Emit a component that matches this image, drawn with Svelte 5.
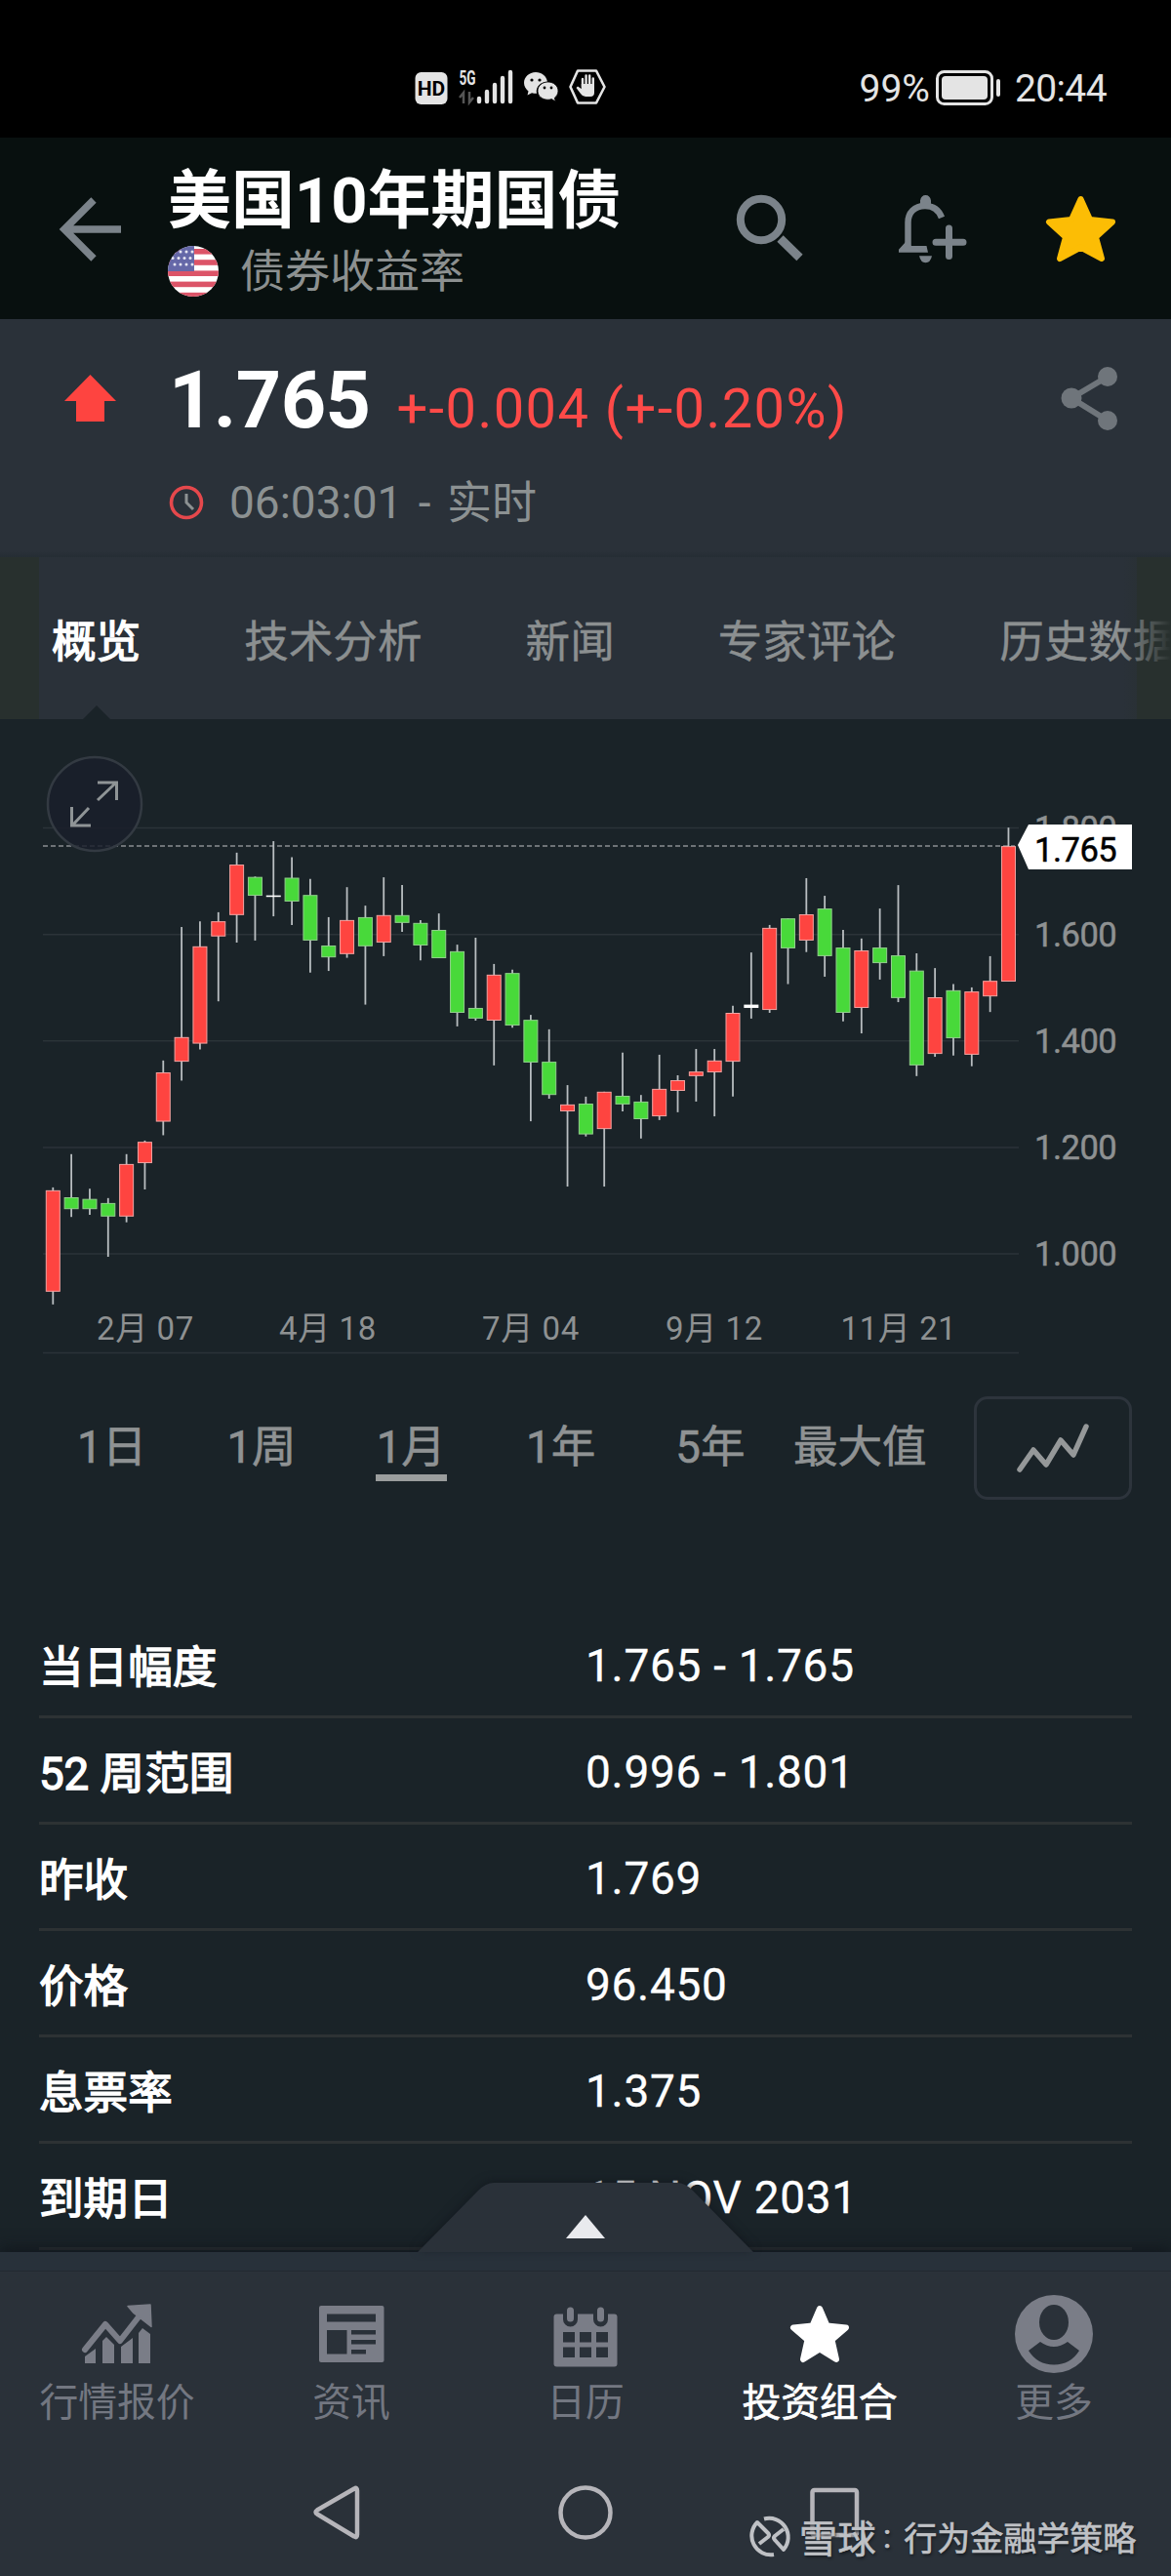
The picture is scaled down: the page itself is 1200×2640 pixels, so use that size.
<script>
  const tabs = ['概览', '技术分析', '新闻', '专家评论', '历史数据'];
  const ranges = ['1日', '1周', '1月', '1年', '5年', '最大值'];
  let activeTab = $state('概览');
  let activeRange = $state('1月');

  const details = [
    ['当日幅度', '1.765 - 1.765'],
    ['52 周范围', '0.996 - 1.801'],
    ['昨收', '1.769'],
    ['价格', '96.450'],
    ['息票率', '1.375'],
    ['到期日', '15 NOV 2031'],
  ];

  const gridPrices = [1.8, 1.6, 1.4, 1.2, 1.0];
  const dates = [
    ['2月 07', 149],
    ['4月 18', 336],
    ['7月 04', 544],
    ['9月 12', 732],
    ['11月 21', 921],
  ];

  // type (r = up, g = down, w = flat), high, body top, body bottom, low
  // levels are measured downwards, 1296 steps per point, 1.800 sits at 258
  const candles = [
    ['r', 1133, 1140, 1387, 1418], ['g', 1052, 1157, 1186, 1205], ['g', 1136, 1161, 1186, 1200],
    ['g', 1159, 1171, 1204, 1302], ['r', 1052, 1076, 1204, 1218], ['r', 1019, 1022, 1074, 1138],
    ['r', 824, 853, 973, 1006], ['r', 499, 767, 827, 873], ['r', 485, 546, 783, 797],
    ['r', 463, 485, 522, 680], ['r', 318, 347, 470, 537], ['g', 376, 377, 423, 532],
    ['w', 290, 422, 424, 473], ['g', 329, 379, 437, 494], ['g', 382, 421, 532, 610],
    ['g', 475, 544, 573, 606], ['r', 402, 482, 565, 574], ['g', 447, 475, 546, 688],
    ['r', 378, 470, 537, 570], ['g', 397, 470, 489, 511], ['g', 482, 489, 544, 580],
    ['g', 466, 506, 575, 575], ['g', 542, 558, 708, 741], ['g', 525, 696, 722, 727],
    ['r', 589, 615, 727, 836], ['g', 603, 611, 739, 744], ['g', 713, 725, 829, 972],
    ['g', 748, 827, 908, 917], ['r', 884, 931, 948, 1131], ['g', 912, 929, 1004, 1009],
    ['r', 900, 900, 991, 1131], ['g', 805, 910, 931, 948], ['g', 908, 924, 967, 1014],
    ['r', 810, 893, 960, 969], ['r', 860, 872, 898, 950], ['r', 796, 851, 862, 924],
    ['r', 796, 824, 853, 960], ['r', 691, 708, 827, 912], ['w', 561, 688, 696, 722],
    ['r', 494, 501, 701, 708], ['g', 478, 478, 551, 638], ['r', 380, 468, 532, 560],
    ['g', 423, 454, 570, 620], ['g', 506, 549, 708, 729], ['r', 527, 556, 696, 758],
    ['g', 454, 549, 587, 627], ['g', 397, 568, 672, 682], ['g', 563, 605, 836, 862],
    ['r', 599, 670, 808, 815], ['g', 638, 653, 770, 812], ['r', 646, 656, 810, 838],
    ['r', 570, 630, 668, 706], ['r', 257, 302, 632, 632],
  ];

  const STEP = 18.83;
  const level = (v) => v / 2.3758;
  const priceY = (p) => level(258 + (1.8 - p) * 1296);
  const candleX = (i) => 54.3 + i * STEP;
</script>

<div class="phone">
  <div class="status">
    <svg class="status-left" width="200" height="40" viewBox="424 70 200 40">
      <rect x="425.5" y="74" width="33" height="33" rx="6" fill="#e4e4e4" />
      <text x="442" y="98" class="hd">HD</text>
      <text x="470.500" y="86.500" class="fiveg" textLength="17" lengthAdjust="spacingAndGlyphs">5G</text>
      <path d="M475 106V95l-4 5M481 94v11l4-5" stroke="#555" stroke-width="2.500" fill="none" />
      <path d="M491 104v-3M499 104v-10M507 104v-17M515 104v-24M523 104v-30" stroke="#e4e4e4" stroke-width="4.400" stroke-linecap="round" />
      <path d="M549 74c-7 0-12 5-12 11 0 3.500 2 6.500 4.500 8.500l-1 4 4.500-2.300c1.500.4 3 .6 5 .6-1.500-7 4-12 11-12-1-6-6-9.800-12-9.800z" fill="#e4e4e4" />
      <path d="M561.500 84c-6 0-10.500 4-10.500 9.200s4.500 9 10.500 9c1.300 0 2.600-.2 3.800-.6l4 2.400-1-3.700c2.300-1.700 3.700-4.200 3.700-7.100 0-5.200-4.500-9.200-10.500-9.200z" fill="#e4e4e4" stroke="#000" stroke-width=".8" />
      <g fill="#000"><circle cx="545" cy="82" r="1.600" /><circle cx="553" cy="82" r="1.600" /><circle cx="558" cy="90" r="1.400" /><circle cx="565" cy="90" r="1.400" /></g>
      <path d="M592 72.500h19l8.500 16.500-8.500 16.500h-19L584.500 89z" fill="none" stroke="#e4e4e4" stroke-width="2.600" stroke-linejoin="round" />
      <path d="M597 89v-8M600.600 88v-10.500M604.200 88v-10.500M607.800 89v-8.500" stroke="#e4e4e4" stroke-width="2.400" stroke-linecap="round" />
      <path d="M609 86v9q0 4-4 4h-5q-3 0-5-3l-4.500-6 1.500-1.500 3.800 2.500V86z" fill="#e4e4e4" />
    </svg>
    <div class="status-right">
      <span>99%</span>
      <svg width="67" height="36" viewBox="0 0 67 36">
        <rect x="1.500" y="1.500" width="56" height="33" rx="7" fill="none" stroke="#e4e4e4" stroke-width="3" />
        <rect x="6" y="6" width="47" height="24" rx="4" fill="#e4e4e4" />
        <rect x="62" y="9" width="4" height="18" rx="2" fill="#e4e4e4" />
      </svg>
      <span class="clock">20:44</span>
    </div>
  </div>

  <header>
    <svg class="back" width="66" height="70" viewBox="0 0 66 70" fill="none" stroke="#7b838a" stroke-width="7.500">
      <path d="M64 35H7M36 5L6 35l30 30" />
    </svg>
    <div class="titles">
      <h1>美国10年期国债</h1>
      <div class="subtitle">
        <svg width="52" height="52" viewBox="0 0 52 52">
          <clipPath id="flag"><circle cx="26" cy="26" r="26" /></clipPath>
          <g clip-path="url(#flag)">
            <rect width="52" height="52" fill="#fff" />
            {#each [0, 1, 2, 3, 4] as i}
              <rect y={3 + i * 11.2} width="52" height="5.600" fill="#dc5468" />
            {/each}
            <rect width="27" height="26" fill="#6568a8" />
            {#each [5, 11.5, 18] as y, r}
              {#each [7, 13, 19, 25] as x}
                <circle cx={x - (r % 2) * 2} cy={y + 1} r="1.500" fill="#e6e6f2" />
              {/each}
            {/each}
          </g>
        </svg>
        <span>债券收益率</span>
      </div>
    </div>
    <svg class="tools" width="400" height="80" viewBox="750 195 400 80">
      <g fill="none" stroke="#7b838a">
        <circle cx="780" cy="225" r="21.200" stroke-width="8" />
        <path d="M799.500 244.500l20 19.500" stroke-width="9" />
        <path d="M965 223c-3-8-9-12-17-12-11 0-17.500 7-17.500 17v27" stroke-width="6.500" />
        <path d="M972.500 234v28.500M959 248.300h28" stroke-width="7" stroke-linecap="round" />
      </g>
      <path d="M943 209v-3.500q1-5.500 5.500-5.500t5.500 5.500v3.500zM921 258.700v-3l7-7.700 6 4h15.500l1.500 6.700zM942 262.200h13q-1.500 7-6.500 7t-6.500-7z" fill="#7b838a" />
      <path d="M1107.500 204l9.500 21 23 2.500-17 15.500 6 22-21.500-11.500-21.500 11.500 6-22-17-15.500 23-2.500z" fill="#fcbd05" stroke="#fcbd05" stroke-width="6" stroke-linejoin="round" />
    </svg>
  </header>

  <section class="quote">
    <svg class="up" width="53" height="48" viewBox="0 0 53 48"><path d="M26.500 0L53 27H41v21H12V27H0z" fill="#fe4440" /></svg>
    <div class="numbers">
      <div class="price-line">
        <strong>1.765</strong>
        <span class="change">+-0.004 (+-0.20%)</span>
      </div>
      <div class="time">
        <svg width="36" height="36" viewBox="0 0 36 36" fill="none">
          <circle cx="18" cy="18" r="15.500" stroke="#e5484c" stroke-width="3.600" />
          <path d="M18 9v9l7 7" stroke="#8d9293" stroke-width="3" />
        </svg>
        <span>06:03:01 - 实时</span>
      </div>
    </div>
    <svg class="share" width="60" height="68" viewBox="0 0 60 68" fill="#6f757b">
      <path d="M48 11L11 33l37 23" fill="none" stroke="#6f757b" stroke-width="6" />
      <circle cx="48" cy="11" r="10" /><circle cx="11" cy="33" r="10.500" /><circle cx="48" cy="56" r="10" />
    </svg>
  </section>

  <nav class="tabs">
    {#each tabs as tab}
      <button class:active={tab === activeTab} onclick={() => (activeTab = tab)}>{tab}</button>
    {/each}
  </nav>

  <main>
    <svg class="chart" width="1200" height="660" viewBox="0 0 1200 660">
      {#each gridPrices as p}
        <line x1="44" x2="1044" y1={priceY(p)} y2={priceY(p)} class="grid" />
        <text x="1060" y={priceY(p) + 12.5} class="axis">{p.toFixed(3)}</text>
      {/each}
      <line x1="44" x2="1044" y1="646.500" y2="646.500" class="grid" />
      <line x1="44" x2="1040" y1="127" y2="127" class="last" />

      {#each candles as [kind, high, top, bottom, low], i}
        <line x1={candleX(i)} x2={candleX(i)} y1={level(high)} y2={level(low)} class="wick" />
        {#if kind === 'w'}
          <rect x={candleX(i) - 7.5} y={level(top)} width="15" height={Math.max(1.6, level(bottom - top))} fill="#fff" />
        {:else}
          <rect x={candleX(i) - 7} y={level(top) + 0.5} width="14" height={level(bottom - top) - 1} class={kind === 'r' ? 'rise' : 'fall'} />
        {/if}
      {/each}

      {#each dates as [label, x]}
        <text {x} y="633" class="date">{label}</text>
      {/each}

      <path d="M1043 126l11-21h106v46h-106z" fill="#fff" />
      <text x="1060" y="142.500" class="axis tag">1.765</text>

      <circle cx="97" cy="84" r="48" fill="#1a1f2a" fill-opacity=".85" stroke="#333a42" stroke-width="2.500" />
      <path d="M100 80l19-18M100 62h19.500v18M91 88l-17 18M73.500 87v19H93" fill="none" stroke="#8f9496" stroke-width="3" />
    </svg>

    <div class="ranges">
      <div class="range-list">
        {#each ranges as range}
          <button class:active={range === activeRange} onclick={() => (activeRange = range)}><span>{range}</span></button>
        {/each}
      </div>
      <button class="chart-type" aria-label="图表类型">
        <svg width="80" height="56" viewBox="0 0 80 56">
          <path d="M6 50l14-20 13 15 15-25 13 15L74 6" fill="none" stroke="#959899" stroke-width="5.500" stroke-linecap="round" stroke-linejoin="round" />
        </svg>
      </button>
    </div>

    <dl>
      {#each details as [name, value]}
        <div class="row">
          <dt>{name}</dt>
          <dd>{value}</dd>
        </div>
      {/each}
    </dl>
  </main>

  <footer>
    <svg class="flap" width="360" height="80" viewBox="420 2228 360 80">
      <path d="M428 2308l62-63q8-8 16-8h188q8 0 16 8l62 63z" fill="#2a3139" />
      <path d="M580 2294l20-24 20 24z" fill="#e9eaee" />
    </svg>
    <div class="handle"></div>
    <div class="menu">
      <div class="item">
        <svg width="80" height="80" viewBox="80 2352 80 80" fill="#7a7d87">
          <path d="M87 2408l21-26 15 17 21-27" fill="none" stroke="#7a7d87" stroke-width="6" stroke-linecap="round" stroke-linejoin="round" />
          <path d="M131 2363.500l23-1.500 1 22.500-9-7-9-7z" stroke="#7a7d87" stroke-width="1.500" stroke-linejoin="round" />
          <path d="M87 2415l11-8v15H87zM105 2399l4-4 8 8v19h-12zM124 2405l12-9v26h-12zM142 2391l4-5 8 6v30h-12z" />
        </svg>
        <span>行情报价</span>
      </div>
      <div class="item">
        <svg width="80" height="80" viewBox="320 2352 80 80">
          <rect x="327" y="2363" width="66.500" height="58" rx="2" fill="#7a7d87" />
          <path d="M335 2371.500h50v8h-50zM335 2388h20.500v24.500H335zM360 2388h25v4.500h-25zM360 2398h25v4.500h-25zM360 2408h15v4.500h-15z" fill="#2a3139" />
        </svg>
        <span>资讯</span>
      </div>
      <div class="item">
        <svg width="80" height="80" viewBox="560 2352 80 80">
          <rect x="567.500" y="2371.500" width="65" height="54" rx="3" fill="#7a7d87" />
          <path d="M584.500 2370v7M615.500 2370v7" stroke="#2a3139" stroke-width="15" stroke-linecap="round" />
          <path d="M584.500 2368v8M615.500 2368v8" stroke="#7a7d87" stroke-width="7" stroke-linecap="round" />
          {#each [577, 594, 611] as x}
            <path d="M{x} 2390h12v10.500h-12zM{x} 2405.500h12v10.500h-12z" fill="#2a3139" />
          {/each}
        </svg>
        <span>日历</span>
      </div>
      <div class="item active">
        <svg width="80" height="80" viewBox="800 2352 80 80">
          <path d="M840 2366l7.500 17.500 19.500 2-14.500 12.500 4.500 20-17-10.500-17 10.500 4.500-20-14.500-12.500 19.500-2z" fill="#fff" stroke="#fff" stroke-width="6" stroke-linejoin="round" />
        </svg>
        <span>投资组合</span>
      </div>
      <div class="item">
        <svg width="80" height="80" viewBox="1040 2352 80 80">
          <circle cx="1080" cy="2392" r="40" fill="#7a7d87" />
          <ellipse cx="1080" cy="2380" rx="15" ry="18" fill="#2a3139" />
          <path d="M1066 2400q14 10 28 0l12 9q-9 14.500-26 14.500t-26-14.500z" fill="#2a3139" />
        </svg>
        <span>更多</span>
      </div>
    </div>
    <svg class="system" width="1200" height="90" viewBox="0 2530 1200 90" fill="none" stroke="#b6b5ba" stroke-width="4.500">
      <path d="M363 2550.500q3-2 3 2v45q0 4-3 2l-38-23q-3-2 0-4z" />
      <circle cx="600" cy="2575" r="25.500" />
      <rect x="832.500" y="2552" width="45.500" height="46" rx="2" />
    </svg>
    <div class="watermark">
      <svg width="44" height="44" viewBox="0 0 44 44" fill="none" stroke="#bfc1c5" stroke-width="4" stroke-linejoin="round">
        <path d="M26 41A19.500 19.500 0 0 1 9 8l11 11q2 2 0 4l-9 7" />
        <path d="M16 4.500A19.500 19.500 0 0 1 36 36l-9-10q-2-2 0-4l9-7" />
      </svg>
      <span class="brand">雪球</span><span class="colon">:</span><span class="author">行为金融学策略</span>
    </div>
  </footer>
</div>

<style>
  :global(body) {
    margin: 0;
    background: #1a2328;
  }

  .phone {
    width: 1200px;
    height: 2640px;
    display: flex;
    flex-direction: column;
    overflow: hidden;
    background: #1a2328;
    color: #fff;
    font-family: Roboto, 'Noto Sans CJK SC', sans-serif;
  }

  button {
    border: 0;
    padding: 0;
    background: none;
    color: inherit;
    font: inherit;
  }

  .status {
    height: 141px;
    flex: none;
    box-sizing: border-box;
    padding: 70px 66px 0 424px;
    display: flex;
    justify-content: space-between;
    align-items: flex-start;
    background: #000;
    color: #e4e4e4;
  }

  .hd {
    font-size: 21px;
    font-weight: 700;
    text-anchor: middle;
    fill: #000;
  }

  .fiveg {
    font-size: 21px;
    font-weight: 700;
    fill: #e4e4e4;
  }

  .status-right {
    display: flex;
    align-items: center;
    height: 42px;
    font-size: 39px;
  }

  .status-right svg {
    margin: -2px 14px 0 6px;
  }

  .clock {
    letter-spacing: -0.6px;
  }

  header {
    height: 186px;
    flex: none;
    display: flex;
    background: #08100f;
  }

  .back {
    margin: 59px 0 0 60px;
  }

  .titles {
    margin: 27px 0 0 46px;
    width: 578px;
  }

  h1 {
    margin: 0;
    font-size: 65px;
    line-height: 76px;
    font-weight: 700;
    white-space: nowrap;
  }

  .subtitle {
    display: flex;
    align-items: center;
    gap: 22px;
    margin-top: 8px;
    line-height: 52px;
    font-size: 46px;
    color: #8c9090;
  }

  .tools {
    margin-top: 54px;
  }

  .quote {
    height: 244px;
    flex: none;
    display: flex;
    background: linear-gradient(#2a3139 238px, #252d34);
  }

  .up {
    margin: 57px 0 0 66px;
  }

  .numbers {
    width: 900px;
    margin: 34px 0 0 54px;
  }

  .price-line {
    display: flex;
    align-items: baseline;
    gap: 27px;
    line-height: 100px;
    white-space: nowrap;
  }

  strong {
    font-size: 81px;
    font-weight: 700;
    letter-spacing: -0.6px;
  }

  .change {
    font-size: 56px;
    color: #fe4a48;
    letter-spacing: 1.45px;
  }

  .time {
    display: flex;
    align-items: center;
    gap: 26px;
    margin-top: 16px;
    line-height: 60px;
    font-size: 46px;
    word-spacing: 5px;
    color: #8c9192;
  }

  .share {
    margin-top: 48px;
    margin-left: 14px;
  }

  .tabs {
    height: 166px;
    flex: none;
    position: relative;
    display: flex;
    gap: 106px;
    padding-left: 53px;
    overflow: hidden;
    background: linear-gradient(90deg, #28302e 40px, #2a3139 40px, #2a3139 1165px, #28302e 1165px);
  }

  /* fade the tab that runs off the right edge */
  .tabs::after {
    content: '';
    position: absolute;
    top: 0;
    right: 0;
    width: 50px;
    height: 100%;
    background: linear-gradient(90deg, transparent, #28302e);
  }

  .tabs button {
    position: relative;
    flex: none;
    font-size: 45.6px;
    color: #8b8f90;
    -webkit-text-stroke: 0.4px;
  }

  .tabs .active {
    color: #fff;
    -webkit-text-stroke: 1.4px;
  }

  .tabs .active::after {
    content: '';
    position: absolute;
    left: 50%;
    bottom: 0;
    margin-left: -14px;
    border: 14px solid transparent;
    border-top: 0;
    border-bottom-color: #1a2328;
  }

  main {
    flex: 1;
    min-height: 0;
    padding-top: 3px;
    overflow: hidden;
  }

  .chart {
    display: block;
  }

  .grid {
    stroke: #2b3338;
    stroke-width: 1.5;
  }

  .last {
    stroke: #8b8f91;
    stroke-width: 1.6;
    stroke-dasharray: 5 3;
  }

  .wick {
    stroke: #b9bec1;
    stroke-width: 1.8;
  }

  .rise {
    fill: #fe4440;
    stroke: #f3a4a2;
  }

  .fall {
    fill: #48d93a;
    stroke: #92cf8d;
  }

  .axis {
    font-size: 34.5px;
    letter-spacing: -0.5px;
    fill: #8e9192;
    stroke: #8e9192;
    stroke-width: 0.5px;
  }

  .tag {
    fill: #000;
    stroke: #000;
  }

  .date {
    font-size: 33px;
    text-anchor: middle;
    fill: #8e9192;
    letter-spacing: 0.6px;
  }

  .ranges {
    display: flex;
    justify-content: space-between;
    height: 106px;
    margin: 31px 40px 0 38px;
  }

  .range-list {
    display: flex;
    width: 920px;
  }

  .range-list button {
    flex: 1;
    font-size: 45.6px;
    color: #8f9293;
    -webkit-text-stroke: 0.6px;
  }

  .range-list span {
    display: inline-block;
    height: 67px;
    line-height: 66px;
    padding: 0 1px;
    box-sizing: border-box;
    white-space: nowrap;
    border-bottom: 7px solid transparent;
  }

  .range-list .active span {
    border-color: #9a9d9d;
  }

  .chart-type {
    width: 162px;
    box-sizing: border-box;
    border: 3px solid #2d343c;
    border-radius: 14px;
    display: flex;
    align-items: center;
    justify-content: center;
  }

  dl {
    margin: 115px 40px 0;
  }

  .row {
    display: flex;
    align-items: center;
    height: 109px;
    box-sizing: border-box;
    border-bottom: 3px solid #2d3234;
  }

  dt {
    width: 560px;
    font-size: 45.6px;
    -webkit-text-stroke: 1.4px;
  }

  dd {
    margin: 0;
    padding-top: 4px;
    font-size: 46px;
    letter-spacing: 0.7px;
    -webkit-text-stroke: 0.3px;
  }

  footer {
    position: relative;
    height: 332px;
    flex: none;
    background: #2a3139;
    box-shadow: 0 -4px 14px rgba(15, 20, 26, 0.8);
  }

  .flap {
    position: absolute;
    left: 420px;
    top: -80px;
    filter: drop-shadow(0 -2px 5px rgba(15, 20, 26, 0.6));
  }

  .handle {
    height: 19px;
    border-bottom: 1px solid #222931;
    background: #28313a;
  }

  .menu {
    display: flex;
    height: 200px;
    padding-top: 24px;
    box-sizing: border-box;
  }

  .item {
    flex: 1;
    display: flex;
    flex-direction: column;
    align-items: center;
    font-size: 39.8px;
    line-height: 61px;
    color: #737781;
  }

  .item.active {
    color: #fff;
    -webkit-text-stroke: 0.7px;
  }

  .system {
    display: block;
    margin-top: 2px;
  }

  .watermark {
    position: absolute;
    left: 767px;
    bottom: 16px;
    display: flex;
    align-items: center;
    height: 50px;
    color: #bfc1c5;
    font-size: 34px;
    -webkit-text-stroke: 0.7px;
    text-shadow: 1px 2px 3px #15191e;
    white-space: nowrap;
  }

  .brand {
    margin-left: 8px;
    font-size: 39px;
    letter-spacing: 0.5px;
  }

  .colon {
    margin: 0 13px 0 7px;
  }
</style>
